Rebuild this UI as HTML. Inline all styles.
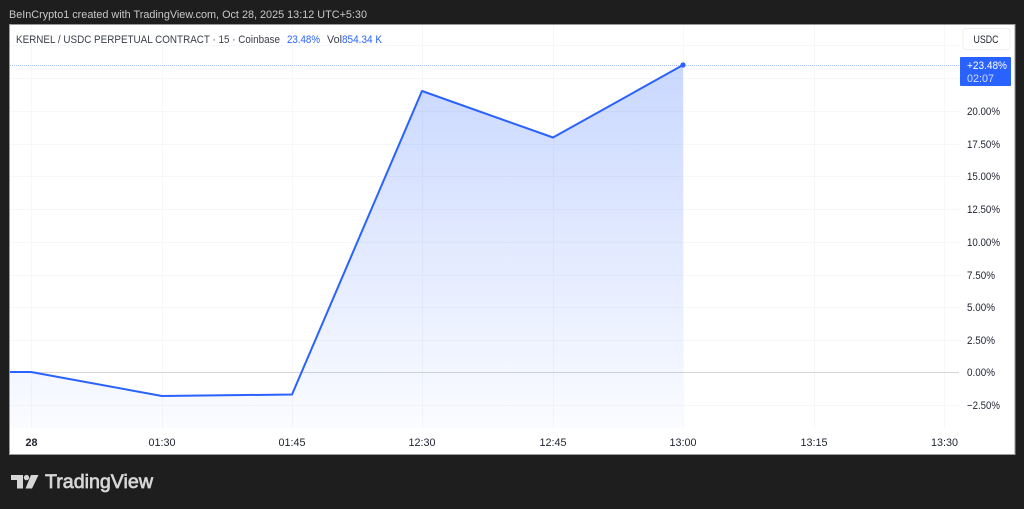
<!DOCTYPE html>
<html>
<head>
<meta charset="utf-8">
<style>
html,body{margin:0;padding:0;width:1024px;height:509px;overflow:hidden;background:#1e1e1e;}
svg{display:block;}
text{font-family:"Liberation Sans",sans-serif;}
</style>
</head>
<body>
<svg width="1024" height="509" viewBox="0 0 1024 509" xmlns="http://www.w3.org/2000/svg">
<defs>
<linearGradient id="g" gradientUnits="userSpaceOnUse" x1="0" y1="65" x2="0" y2="428">
<stop offset="0" stop-color="#2962ff" stop-opacity="0.25"/>
<stop offset="1" stop-color="#2962ff" stop-opacity="0.02"/>
</linearGradient>
</defs>
<rect width="1024" height="509" fill="#1e1e1e"/>
<text x="9" y="18" font-size="11" fill="#c8c8c8" textLength="358" lengthAdjust="spacingAndGlyphs">BeInCrypto1 created with TradingView.com, Oct 28, 2025 13:12 UTC+5:30</text>
<rect x="9.5" y="24.5" width="1005.5" height="430" fill="#ffffff" stroke="#9a9a9a" stroke-width="1"/>
<g stroke="#f6f7f8" stroke-width="1" fill="none">
<path d="M10 45.5H959M10 78.5H959M10 111.5H959M10 144.5H959M10 176.5H959M10 209.5H959M10 242.5H959M10 275.5H959M10 307.5H959M10 340.5H959M10 405.5H959"/>
<path d="M31.5 25V428M162.5 25V428M292.5 25V428M422.5 25V428M553.5 25V428M683.5 25V428M814.5 25V428M944.5 25V428"/>
</g>
<path d="M10 372.5H959" stroke="#d6d6d6" stroke-width="1" fill="none"/>
<path d="M10 372L31 372L162 396L292 394.5L422 91L553 137.5L683 65V428H10Z" fill="url(#g)"/>
<path d="M10 65.5H959" stroke="#a9c0fa" stroke-width="1" stroke-dasharray="1 1" fill="none"/>
<path d="M10 372L31 372L162 396L292 394.5L422 91L553 137.5L683 65" fill="none" stroke="#2962ff" stroke-width="2" stroke-linejoin="round"/>
<circle cx="683" cy="65" r="2.6" fill="#2962ff"/>
<text x="16" y="43" font-size="11" fill="#3a3e4a" textLength="264" lengthAdjust="spacingAndGlyphs">KERNEL / USDC PERPETUAL CONTRACT · 15 · Coinbase</text>
<text x="287" y="43" font-size="11" fill="#2962ff" textLength="33" lengthAdjust="spacingAndGlyphs">23.48%</text>
<text x="327" y="43" font-size="11" fill="#3a3e4a" textLength="15" lengthAdjust="spacingAndGlyphs">Vol</text>
<text x="342" y="43" font-size="11" fill="#2962ff" textLength="40" lengthAdjust="spacingAndGlyphs">854.34 K</text>
<rect x="963" y="28.5" width="47" height="21" rx="3" fill="#fff" stroke="#f0f0f0"/>
<text x="973.5" y="43" font-size="11" fill="#1f2330" textLength="25" lengthAdjust="spacingAndGlyphs">USDC</text>
<rect x="960" y="57" width="51" height="29" rx="1" fill="#2962ff"/>
<text x="967" y="69" font-size="11" fill="#ffffff" textLength="40" lengthAdjust="spacingAndGlyphs">+23.48%</text>
<text x="967" y="82" font-size="11" fill="#d4dffc" textLength="27" lengthAdjust="spacingAndGlyphs">02:07</text>
<g font-size="11" fill="#1f2330">
<text x="967" y="115" textLength="33" lengthAdjust="spacingAndGlyphs">20.00%</text>
<text x="967" y="148" textLength="33" lengthAdjust="spacingAndGlyphs">17.50%</text>
<text x="967" y="180" textLength="33" lengthAdjust="spacingAndGlyphs">15.00%</text>
<text x="967" y="213" textLength="33" lengthAdjust="spacingAndGlyphs">12.50%</text>
<text x="967" y="246" textLength="33" lengthAdjust="spacingAndGlyphs">10.00%</text>
<text x="967" y="279" textLength="28" lengthAdjust="spacingAndGlyphs">7.50%</text>
<text x="967" y="311" textLength="28" lengthAdjust="spacingAndGlyphs">5.00%</text>
<text x="967" y="344" textLength="28" lengthAdjust="spacingAndGlyphs">2.50%</text>
<text x="967" y="376" textLength="28" lengthAdjust="spacingAndGlyphs">0.00%</text>
<text x="967" y="409" textLength="33" lengthAdjust="spacingAndGlyphs">−2.50%</text>
</g>
<g font-size="11" fill="#1f2330">
<text x="25.5" y="446" font-weight="bold" textLength="12" lengthAdjust="spacingAndGlyphs">28</text>
<text x="148.5" y="446" textLength="27" lengthAdjust="spacingAndGlyphs">01:30</text>
<text x="278.5" y="446" textLength="27" lengthAdjust="spacingAndGlyphs">01:45</text>
<text x="408.5" y="446" textLength="27" lengthAdjust="spacingAndGlyphs">12:30</text>
<text x="539.5" y="446" textLength="27" lengthAdjust="spacingAndGlyphs">12:45</text>
<text x="669.5" y="446" textLength="27" lengthAdjust="spacingAndGlyphs">13:00</text>
<text x="800.5" y="446" textLength="27" lengthAdjust="spacingAndGlyphs">13:15</text>
<text x="931" y="446" textLength="27" lengthAdjust="spacingAndGlyphs">13:30</text>
</g>
<path d="M11 475H23V488.5H17V480H11Z" fill="#d6d6d6"/>
<circle cx="26.5" cy="477.6" r="2.7" fill="#d6d6d6"/>
<path d="M31 475H38.5L32 488.5H25.5Z" fill="#d6d6d6"/>
<text x="45" y="488" font-size="19" fill="#d6d6d6" stroke="#d6d6d6" stroke-width="0.7" textLength="108" lengthAdjust="spacingAndGlyphs">TradingView</text>
</svg>
</body>
</html>
